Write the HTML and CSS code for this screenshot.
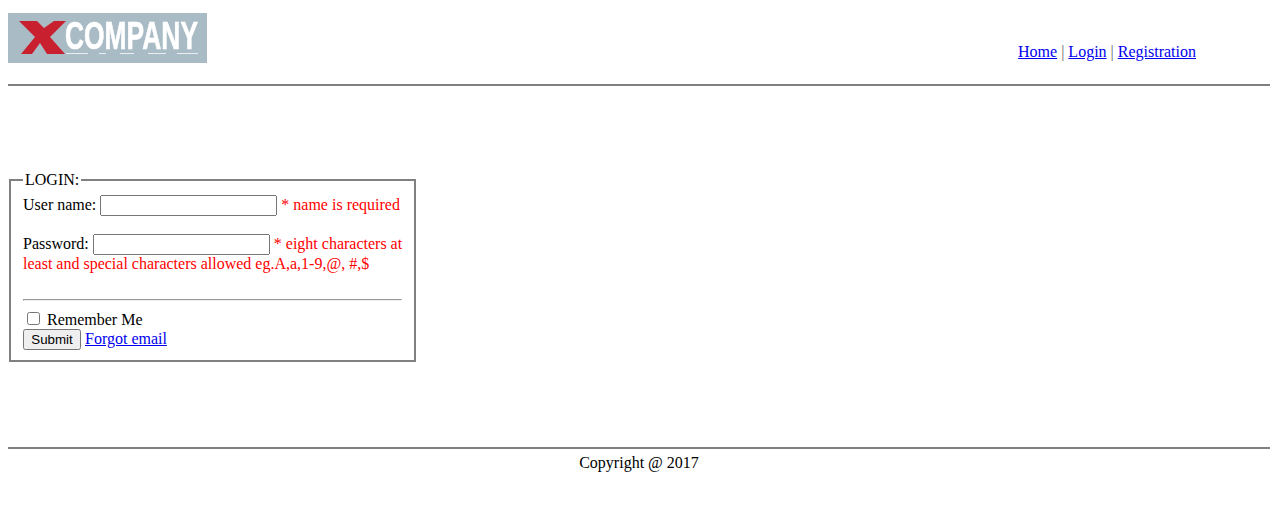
FILE: index.html
```html
<!DOCTYPE html>
<html lang="en">
<head>
<meta charset="utf-8">
<title>Login</title>
<link rel="stylesheet" href="styles.css">
</head>
<body>
<header class="header">
  <svg class="logo" width="199" height="50" viewBox="0 0 199 50" role="img" aria-label="X Company logo">
    <rect width="199" height="50" fill="#a9bbc5"/>
    <g class="logo-art">
      <polygon class="logo-x" points="11,8 29,8 36,15 46,8 58,8 42,24 57,41 39,41 32,30 24,41 13,41 27,24"/>
      <text class="logo-word" x="57" y="36" textLength="133" lengthAdjust="spacingAndGlyphs">COMPANY</text>
      <g class="logo-dashes">
        <rect x="58" y="40" width="22" height="1"/>
        <rect x="91" y="40" width="7" height="1"/>
        <rect x="112" y="40" width="14" height="1"/>
        <rect x="140" y="40" width="18" height="1"/>
        <rect x="169" y="40" width="21" height="1"/>
      </g>
    </g>
  </svg>
  <nav class="nav"><a href="#">Home</a> <span class="sep">|</span> <a href="#">Login</a> <span class="sep">|</span> <a href="#">Registration</a></nav>
</header>
<hr class="rule">
<main class="main">
  <form>
    <fieldset class="login">
      <legend>LOGIN:</legend>
      User name: <input type="text" class="field"> <span class="error">* name is required</span><br><br>
      Password: <input type="password" class="field"> <span class="error">* eight characters at least and special characters allowed eg.A,a,1-9,@, #,$</span><br><br>
      <hr class="divider">
      <input type="checkbox" class="check"> Remember Me<br>
      <input type="submit" value="Submit" class="submit"> <a href="#">Forgot email</a>
    </fieldset>
  </form>
</main>
<hr class="rule">
<footer class="footer">Copyright @ 2017</footer>
</body>
</html>
```
FILE: styles.css
```css
html, body {
  background: #fff;
}
body {
  margin: 8px;
  font-family: "Liberation Serif", "Times New Roman", serif;
  font-size: 16px;
  color: #000;
}
.header {
  display: flex;
  justify-content: space-between;
  align-items: flex-start;
  padding-top: 5px;
  height: 63px;
}
.logo {
  display: block;
  flex: none;
}
.logo-art {
  filter: blur(0.4px);
}
.logo-word {
  font-family: "Liberation Sans", Arial, sans-serif;
  font-weight: 700;
  font-size: 38.5px;
  fill: #fff;
  stroke: #fff;
  stroke-width: 0.6px;
}
.logo-x {
  fill: #c9202f;
}
.logo-dashes {
  fill: #e8eef1;
}
.nav {
  margin-top: 30px;
  margin-right: 74px;
}
.sep {
  color: #666;
}
.rule {
  margin: 8px -1px;
  height: 0;
  border: 0;
  border-top: 2px solid #808080;
}
.main {
  padding-top: 77px;
  padding-bottom: 77px;
}
.login {
  width: 380px;
  margin: 0 1px;
  padding: 6px 11px 10px 12px;
  border: 2px solid #808080;
  box-sizing: content-box;
}
.field {
  width: 177px;
  height: 21px;
  box-sizing: border-box;
  font-size: 13.33px;
}
.error {
  color: #f00;
}
.divider {
  margin: 8px 1px 8px 0;
}
.submit {
  width: 58px;
  height: 21px;
  padding: 0;
  font-family: "Liberation Sans", Arial, sans-serif;
  font-size: 13.33px;
}
.footer {
  text-align: center;
  margin-top: -3px;
}
```
